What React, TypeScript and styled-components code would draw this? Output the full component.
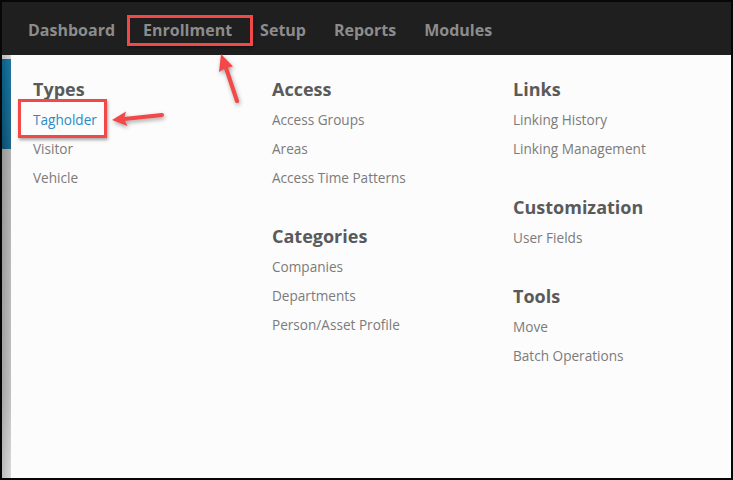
import { FC } from 'react'
import styled, { createGlobalStyle, css } from 'styled-components'

const GlobalStyle = createGlobalStyle`
  html, body {
    margin: 0;
    padding: 0;
    background: #000;
  }
`

const Frame = styled.div`
  width: 733px;
  height: 480px;
  box-sizing: border-box;
  border: 2px solid #070707;
  display: flex;
  flex-direction: column;
  position: relative;
  overflow: hidden;
  font-family: 'Open Sans', 'Noto Sans', sans-serif;
  background: #fcfcfc;
`

const NavBar = styled.div`
  height: 53px;
  flex-shrink: 0;
  background: #1f1f1f;
  display: flex;
  align-items: stretch;
  padding-left: 12px;
`

const redBox = css`
  content: '';
  position: absolute;
  border: 3px solid #f24848;
  box-shadow: 1px 2px 3px rgba(0, 0, 0, 0.35);
  pointer-events: none;
`

const NavItem = styled.div<{ $marked?: boolean }>`
  position: relative;
  display: flex;
  align-items: center;
  padding: 3px 14px 0;
  font-size: 16px;
  font-weight: 700;
  color: #8c8c8c;
  cursor: default;

  ${({ $marked }) => $marked && css`
    &::after {
      ${redBox}
      top: 13px;
      bottom: 9px;
      left: -2px;
      right: -7px;
    }
  `}
`

const Body = styled.div`
  flex: 1;
  display: flex;
`

const SideStrip = styled.div`
  width: 9px;
  flex-shrink: 0;
  background:
    linear-gradient(to right, rgba(0, 0, 0, 0.12), rgba(255, 255, 255, 0.08)),
    linear-gradient(
      to bottom,
      #d4d4d4 0,
      #d4d4d4 4px,
      #0b6b9a 4px,
      #0a5880 94px,
      #ababab 94px,
      #bcbcbc 80%,
      #d8d8d8 100%
    );
`

const MenuPanel = styled.div`
  flex: 1;
  background: #fcfcfc;
  display: grid;
  grid-template-columns: 239px 241px 1fr;
  align-items: start;
  padding: 22px 0 0 22px;
`

const Column = styled.div`
  display: flex;
  flex-direction: column;
  gap: 32px;
`

const Section = styled.div`
  display: flex;
  flex-direction: column;
`

const Heading = styled.div`
  font-size: 18px;
  line-height: 24px;
  font-weight: 700;
  color: #5a5a5a;
  margin-bottom: 4px;
`

const Item = styled.div<{ $active?: boolean; $marked?: boolean }>`
  position: relative;
  align-self: flex-start;
  font-size: 13.6px;
  line-height: 29px;
  color: ${({ $active }) => ($active ? '#2a8bc4' : '#7b7b7b')};
  cursor: default;

  ${({ $marked }) => $marked && css`
    &::after {
      ${redBox}
      top: -6px;
      bottom: -4px;
      left: -15px;
      right: -10px;
    }
  `}
`

const Annotations = styled.svg`
  position: absolute;
  left: -2px;
  top: -2px;
  width: 733px;
  height: 480px;
  pointer-events: none;
  filter: drop-shadow(1px 2px 2px rgba(0, 0, 0, 0.35));
`

type MenuSection = { title: string; items: string[] }

const columns: MenuSection[][] = [
  [{ title: 'Types', items: ['Tagholder', 'Visitor', 'Vehicle'] }],
  [
    { title: 'Access', items: ['Access Groups', 'Areas', 'Access Time Patterns'] },
    { title: 'Categories', items: ['Companies', 'Departments', 'Person/Asset Profile'] },
  ],
  [
    { title: 'Links', items: ['Linking History', 'Linking Management'] },
    { title: 'Customization', items: ['User Fields'] },
    { title: 'Tools', items: ['Move', 'Batch Operations'] },
  ],
]

const navItems = ['Dashboard', 'Enrollment', 'Setup', 'Reports', 'Modules']

const App: FC = () => {
  return (
    <>
      <GlobalStyle />
      <Frame>
        <NavBar>
          {navItems.map((label) => (
            <NavItem key={label} $marked={label === 'Enrollment'}>
              {label}
            </NavItem>
          ))}
        </NavBar>
        <Body>
          <SideStrip />
          <MenuPanel>
            {columns.map((sections, i) => (
              <Column key={i}>
                {sections.map((section) => (
                  <Section key={section.title}>
                    <Heading>{section.title}</Heading>
                    {section.items.map((item) => (
                      <Item
                        key={item}
                        $active={item === 'Tagholder'}
                        $marked={item === 'Tagholder'}
                      >
                        {item}
                      </Item>
                    ))}
                  </Section>
                ))}
              </Column>
            ))}
          </MenuPanel>
        </Body>
        <Annotations viewBox="0 0 733 480">
          {/* arrow pointing at Tagholder */}
          <line x1="162" y1="115" x2="124" y2="119" stroke="#f24848" strokeWidth="4" strokeLinecap="round" />
          <polygon points="112,120 126,111.5 124,119 127.5,126" fill="#f24848" />
          {/* arrow pointing up at Enrollment */}
          <line x1="237" y1="101" x2="226" y2="68" stroke="#f24848" strokeWidth="4" strokeLinecap="round" />
          <polygon points="221,54 233,66.5 226,68 219,72" fill="#f24848" />
        </Annotations>
      </Frame>
    </>
  )
}

export default App
